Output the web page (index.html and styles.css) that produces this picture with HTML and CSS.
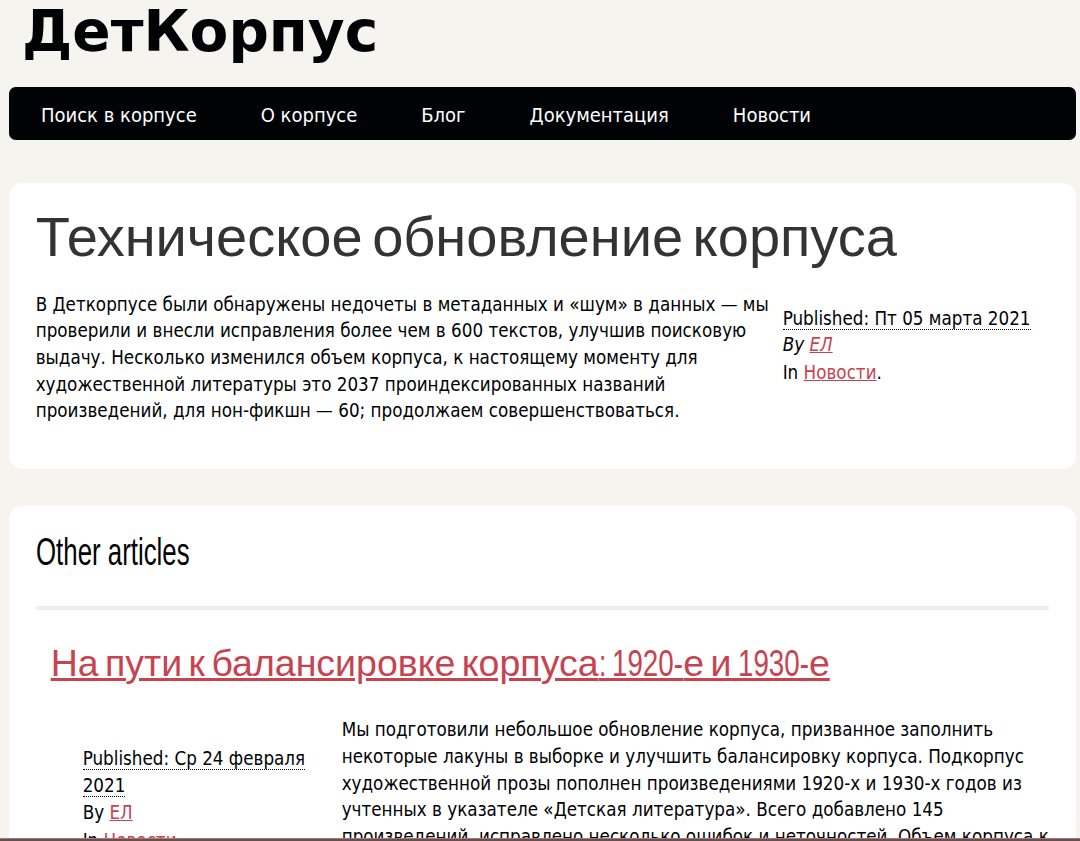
FILE: index.html
```html
<!DOCTYPE html>
<html lang="ru">
<head>
<meta charset="utf-8">
<title>ДетКорпус</title>
<link rel="stylesheet" href="styles.css">
</head>
<body>
<div class="page">
  <header class="banner">
    <h1 class="logo"><a href="#">ДетКорпус</a></h1>
    <nav class="menu">
      <ul>
        <li><a href="#">Поиск в корпусе</a></li>
        <li><a href="#">О корпусе</a></li>
        <li><a href="#">Блог</a></li>
        <li><a href="#">Документация</a></li>
        <li><a href="#">Новости</a></li>
      </ul>
    </nav>
  </header>

  <aside class="card featured">
    <article>
      <h1 class="featured-title"><a href="#">Техническое обновление корпуса</a></h1>
      <div class="featured-body">
        <p class="summary">В Деткорпусе были обнаружены недочеты в метаданных и «шум» в данных — мы проверили и внесли исправления более чем в 600 текстов, улучшив поисковую выдачу. Несколько изменился объем корпуса, к настоящему моменту для художественной литературы это 2037 проиндексированных названий произведений, для нон-фикшн — 60; продолжаем совершенствоваться.</p>
        <footer class="post-info">
          <abbr class="published">Published: Пт 05 марта 2021</abbr>
          <address class="author">By <a href="#">ЕЛ</a></address>
          <p>In <a href="#">Новости</a>.</p>
        </footer>
      </div>
    </article>
  </aside>

  <section class="card content">
    <h1 class="section-title"><span class="narrow">Other articles</span></h1>
    <hr class="rule">
    <ol class="posts">
      <li>
        <article class="entry">
          <h2 class="entry-title"><a href="#">На пути к балансировке корпуса<span class="colon">:</span> <span class="digits">1920-</span>е и <span class="digits">1930-</span>е</a></h2>
          <div class="entry-body">
            <footer class="side-info">
              <abbr class="published">Published: Ср 24 февраля 2021</abbr>
              <p>By <a href="#">ЕЛ</a></p>
              <p>In <a href="#">Новости</a>.</p>
            </footer>
            <p class="summary">Мы подготовили небольшое обновление корпуса, призванное заполнить некоторые лакуны в выборке и улучшить балансировку корпуса. Подкорпус художественной прозы пополнен произведениями 1920-х и 1930-х годов из учтенных в указателе «Детская литература». Всего добавлено 145 произведений, исправлено несколько ошибок и неточностей. Объем корпуса к настоящему моменту для художественной литературы составляет 2182 проиндексированных названия.</p>
          </div>
        </article>
      </li>
    </ol>
  </section>
</div>
<div class="bottom-strip"></div>
</body>
</html>
```
FILE: styles.css
```css
* { box-sizing: border-box; }

html, body {
  margin: 0;
  padding: 0;
}

body {
  background: #f5f4ef;
  color: #000305;
  font-family: "DejaVu Sans Condensed", "DejaVu Sans", sans-serif;
  font-stretch: condensed;
  font-size: 18.67px;
  line-height: 26.67px;
}

a { color: #c74350; }

.page {
  width: 1066.67px;
  margin-left: 9px;
}

.logo {
  margin: 0;
  height: 64px;
  font-family: "DejaVu Sans", sans-serif;
  font-stretch: normal;
  font-weight: bold;
  font-size: 56.5px;
  line-height: 64px;
}

.logo a {
  color: #000305;
  text-decoration: none;
  padding-left: 13px;
}

.menu {
  margin-top: 23px;
  background: #000305;
  height: 53.33px;
  border-radius: 6.67px;
}

.menu ul {
  list-style: none;
  margin: 0;
  padding: 0;
  display: flex;
}

.menu a {
  display: block;
  color: #fff;
  text-decoration: none;
  padding: 7.5px 32px 6px;
  line-height: 40px;
  font-size: 20px;
}

.card {
  background: #fff;
  border-radius: 13.33px;
  padding: 26.67px;
}

.featured {
  margin-top: 42.67px;
  margin-bottom: 37.33px;
}

.featured-title {
  margin: 0;
  font-family: "Liberation Sans", Arial, sans-serif;
  font-stretch: normal;
  font-weight: normal;
  font-size: 56px;
  line-height: 54px;
  word-spacing: -6px;
}

.featured-title a {
  color: #333;
  text-decoration: none;
}

.featured-body {
  display: grid;
  grid-template-columns: 747px 1fr;
  margin-top: 28px;
}

.summary {
  margin: 0 0 17.33px;
}

.post-info {
  padding-top: 14px;
}

.published {
  text-decoration: none;
  border-bottom: 1px dotted #000305;
}

.post-info p,
.post-info address,
.side-info p {
  margin: 0 0 1.33px;
}

.author { font-style: italic; }

.section-title {
  margin: 0;
  font-family: "Liberation Sans", Arial, sans-serif;
  font-stretch: normal;
  font-weight: normal;
  font-size: 38px;
  line-height: 39.6px;
}

.narrow {
  display: inline-block;
  transform: scaleX(0.68);
  transform-origin: 0 50%;
}

.rule {
  height: 4px;
  background: #eee;
  border: 0;
  margin: 33px 0 32px;
}

.posts {
  list-style: none;
  margin: 0;
  padding: 0 0 0 15px;
}

.entry-title {
  margin: 0;
  font-family: "Liberation Sans", Arial, sans-serif;
  font-stretch: normal;
  font-weight: normal;
  font-size: 37.5px;
  line-height: 42.9px;
  word-spacing: -4px;
}

.entry-title a { color: #c74350; }

.colon {
  display: inline-block;
  text-decoration: underline;
  transform: scaleX(0.7);
  transform-origin: 0 50%;
  margin-right: -3px;
}

.digits {
  display: inline-block;
  text-decoration: underline;
  transform: scaleX(0.74);
  transform-origin: 0 50%;
  margin-right: -25px;
}

.entry-body {
  display: grid;
  grid-template-columns: 253px 1fr;
  column-gap: 6px;
  padding-left: 32px;
  margin-top: 33px;
}

.side-info {
  grid-column: 1;
  grid-row: 1;
  padding-top: 29px;
}

.entry-body .summary {
  grid-column: 2;
  grid-row: 1;
}

.bottom-strip {
  position: fixed;
  left: 0;
  right: 0;
  bottom: 0;
  height: 3px;
  border-top: 1px solid #d9646e;
  background: #55584f;
}
```
